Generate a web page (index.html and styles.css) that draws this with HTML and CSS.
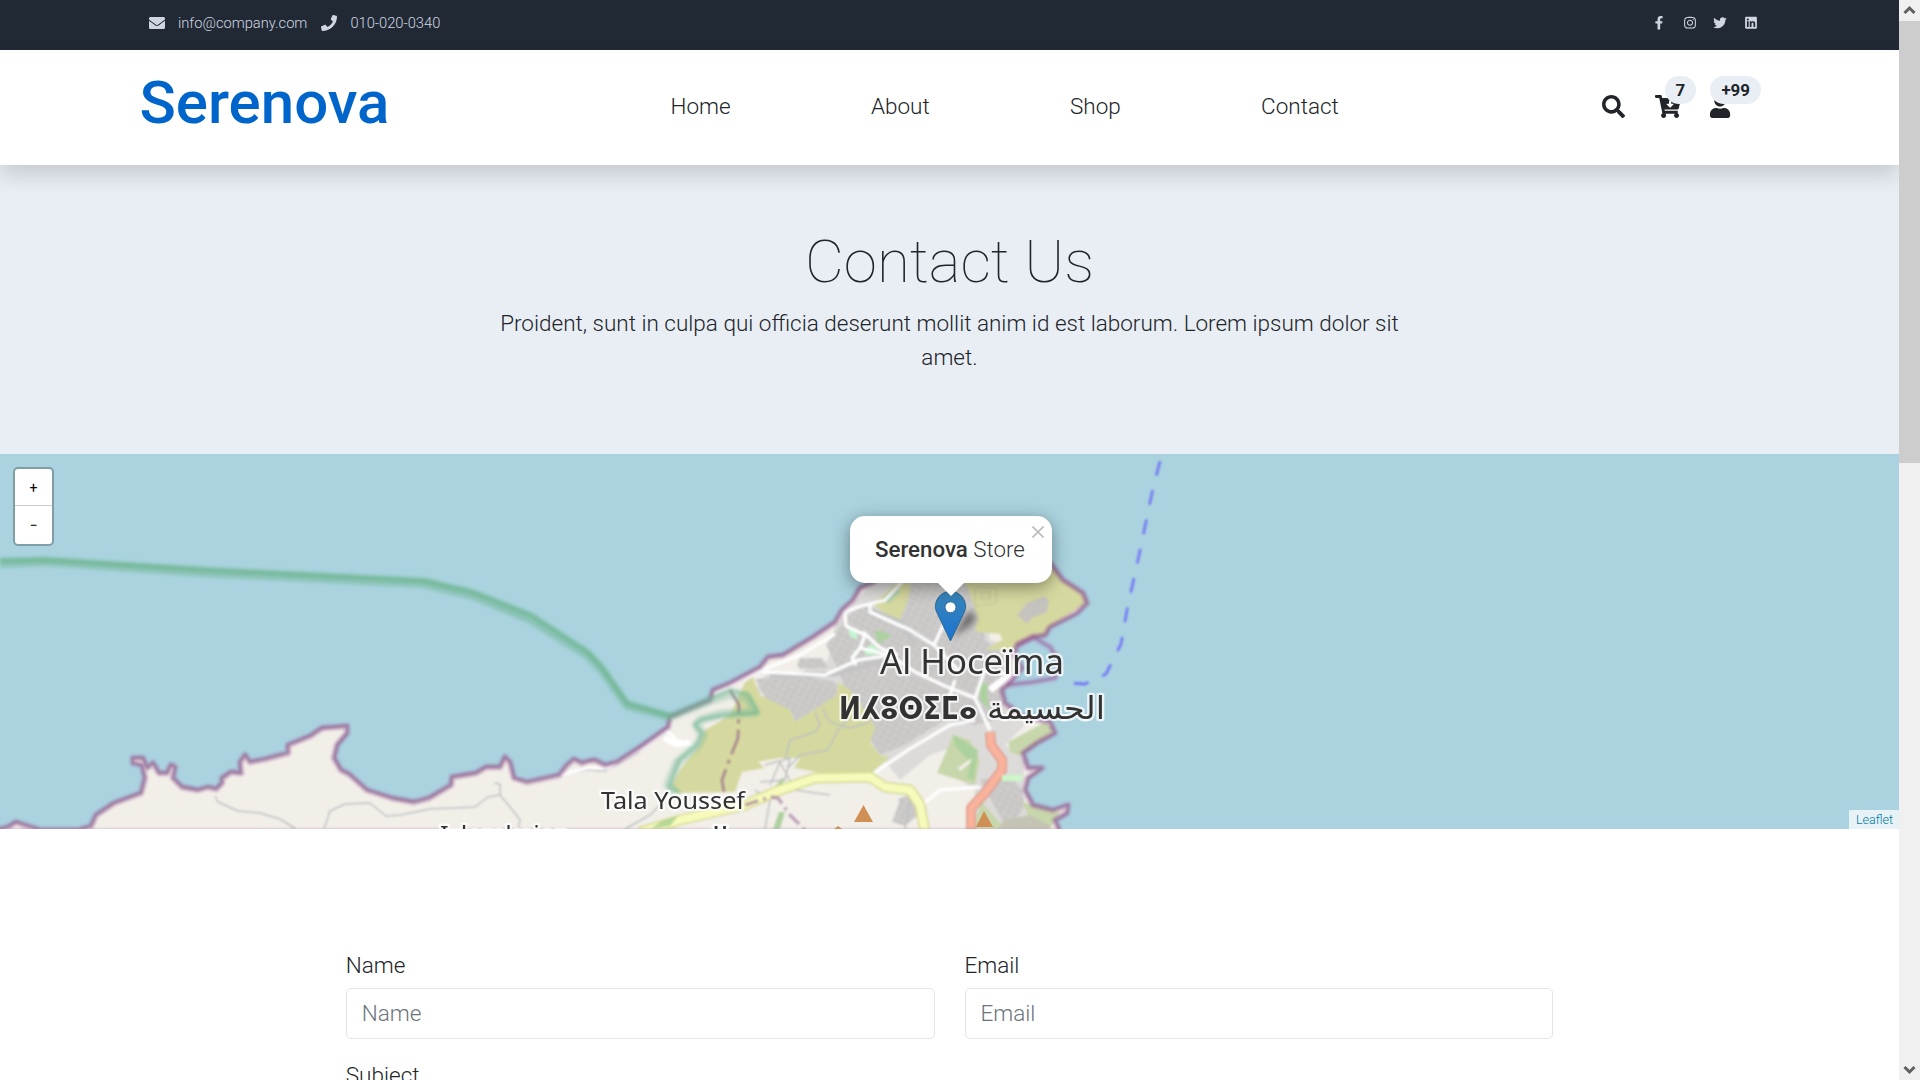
FILE: index.html
```html
<!DOCTYPE html>
<html lang="en">
<head>
<meta charset="utf-8">
<title>Serenova - Contact</title>
<link rel="stylesheet" href="styles.css">
</head>
<body>
<div class="page">
  <div class="topbar">
    <div class="container topbar-row">
      <div class="contact-links">
        <svg class="ic-mail" viewBox="0 0 512 512"><path d="M502.3 190.8c3.9-3.1 9.7-.2 9.7 4.7V400c0 26.5-21.5 48-48 48H48c-26.5 0-48-21.5-48-48V195.6c0-5 5.7-7.8 9.7-4.7 22.4 17.4 52.1 39.5 154.1 113.6 21.1 15.4 56.7 47.8 92.2 47.6 35.7.3 72-32.8 92.3-47.6 102-74.1 131.6-96.3 154-113.7zM256 320c23.2.4 56.6-29.2 73.4-41.4 132.7-96.3 142.8-104.7 173.4-128.7 5.8-4.5 9.2-11.5 9.2-18.9v-19c0-26.5-21.5-48-48-48H48c-26.5 0-48 21.5-48 48v19c0 7.4 3.4 14.3 9.2 18.9 30.6 23.9 40.7 32.4 173.4 128.7 16.8 12.2 50.2 41.8 73.4 41.4z"/></svg>
        <a class="mail">info@company.com</a>
        <svg class="ic-phone" viewBox="0 0 512 512"><path d="M493.4 24.6l-104-24c-11.3-2.6-22.9 3.3-27.5 13.9l-48 112c-4.2 9.8-1.4 21.3 6.9 28l60.6 49.6c-36 76.7-98.9 140.5-177.2 177.2l-49.6-60.6c-6.8-8.3-18.2-11.1-28-6.9l-112 48C3.9 366.5-2 378.1.6 389.4l24 104C27.1 504.2 36.7 512 48 512c256.1 0 464-207.5 464-464 0-11.2-7.7-20.9-18.6-23.4z"/></svg>
        <a>010-020-0340</a>
      </div>
      <div class="social">
        <svg viewBox="0 0 320 512"><path d="M279.14 288l14.22-92.66h-88.91v-60.13c0-25.35 12.42-50.06 52.24-50.06h40.42V6.26S260.43 0 225.36 0c-73.22 0-121.08 44.38-121.08 124.72v70.62H22.89V288h81.39v224h100.17V288z"/></svg>
        <svg viewBox="0 0 448 512"><path d="M224.1 141c-63.6 0-114.9 51.3-114.9 114.9s51.3 114.9 114.9 114.9S339 319.5 339 255.9 287.7 141 224.1 141zm0 189.6c-41.1 0-74.7-33.5-74.7-74.7s33.5-74.7 74.7-74.7 74.7 33.5 74.7 74.7-33.6 74.7-74.7 74.7zm146.4-194.3c0 14.9-12 26.8-26.8 26.8-14.9 0-26.8-12-26.8-26.8s12-26.8 26.8-26.8 26.8 12 26.8 26.8zm76.1 27.2c-1.7-35.9-9.9-67.7-36.2-93.9-26.2-26.2-58-34.4-93.9-36.2-37-2.1-147.9-2.1-184.9 0-35.8 1.7-67.6 9.9-93.9 36.1s-34.4 58-36.2 93.9c-2.1 37-2.1 147.9 0 184.9 1.7 35.9 9.9 67.7 36.2 93.9s58 34.4 93.9 36.2c37 2.1 147.9 2.1 184.9 0 35.9-1.7 67.7-9.9 93.9-36.2 26.2-26.2 34.4-58 36.2-93.9 2.1-37 2.1-147.8 0-184.8zM398.8 388c-7.8 19.6-22.9 34.7-42.6 42.6-29.5 11.7-99.5 9-132.1 9s-102.7 2.6-132.1-9c-19.6-7.8-34.7-22.9-42.6-42.6-11.7-29.5-9-99.5-9-132.1s-2.6-102.7 9-132.1c7.8-19.6 22.9-34.7 42.6-42.6 29.5-11.7 99.5-9 132.1-9s102.7-2.6 132.1 9c19.6 7.8 34.7 22.9 42.6 42.6 11.7 29.5 9 99.5 9 132.1s2.7 102.7-9 132.1z"/></svg>
        <svg viewBox="0 0 512 512"><path d="M459.37 151.716c.325 4.548.325 9.097.325 13.645 0 138.72-105.583 298.558-298.558 298.558-59.452 0-114.68-17.219-161.137-47.106 8.447.974 16.568 1.299 25.34 1.299 49.055 0 94.213-16.568 130.274-44.832-46.132-.975-84.792-31.188-98.112-72.772 6.498.974 12.995 1.624 19.818 1.624 9.421 0 18.843-1.3 27.614-3.573-48.081-9.747-84.143-51.98-84.143-102.985v-1.299c13.969 7.797 30.214 12.67 47.431 13.319-28.264-18.843-46.781-51.005-46.781-87.391 0-19.492 5.197-37.36 14.294-52.954 51.655 63.675 129.3 105.258 216.365 109.807-1.624-7.797-2.599-15.918-2.599-24.04 0-57.828 46.782-104.934 104.934-104.934 30.213 0 57.502 12.67 76.67 33.137 23.715-4.548 46.456-13.32 66.599-25.34-7.798 24.366-24.366 44.833-46.132 57.827 21.117-2.273 41.584-8.122 60.426-16.243-14.292 20.791-32.161 39.308-52.628 54.253z"/></svg>
        <svg viewBox="0 0 448 512"><path d="M416 32H31.9C14.3 32 0 46.5 0 64.3v383.4C0 465.5 14.3 480 31.9 480H416c17.6 0 32-14.5 32-32.3V64.3c0-17.8-14.4-32.3-32-32.3zM135.4 416H69V202.2h66.5V416zm-33.2-243c-21.3 0-38.5-17.3-38.5-38.5S80.9 96 102.2 96c21.2 0 38.5 17.3 38.5 38.5 0 21.3-17.2 38.5-38.5 38.5zm282.1 243h-66.4V312c0-24.8-.5-56.7-34.5-56.7-34.6 0-39.9 27-39.9 54.9V416h-66.4V202.2h63.7v29.2h.9c8.9-16.8 30.6-34.5 62.9-34.5 67.2 0 79.7 44.3 79.7 101.9V416z"/></svg>
      </div>
    </div>
  </div>

  <header class="header">
    <div class="container header-row">
      <a class="logo">Serenova</a>
      <nav class="nav"><a>Home</a><a>About</a><a>Shop</a><a>Contact</a></nav>
      <div class="tools">
        <span class="tool"><svg viewBox="0 0 512 512"><path d="M505 442.7L405.3 343c-4.5-4.5-10.6-7-17-7H372c27.6-35.3 44-79.7 44-128C416 93.1 322.9 0 208 0S0 93.1 0 208s93.1 208 208 208c48.3 0 92.7-16.4 128-44v16.3c0 6.4 2.5 12.5 7 17l99.7 99.7c9.4 9.4 24.6 9.4 33.9 0l28.3-28.3c9.4-9.4 9.4-24.6.1-34zM208 336c-70.7 0-128-57.2-128-128 0-70.7 57.2-128 128-128 70.7 0 128 57.2 128 128 0 70.7-57.2 128-128 128z"/></svg></span>
        <span class="tool"><svg viewBox="0 0 576 512"><path d="M504.717 320H211.572l6.545 32h268.418c15.401 0 26.816 14.301 23.403 29.319l-5.517 24.276C523.112 414.668 536 433.828 536 456c0 31.202-25.519 56.444-56.824 55.994-29.823-.429-54.35-24.631-55.155-54.447-.44-16.287 6.085-31.049 16.803-41.548H231.176C241.553 426.165 248 440.326 248 456c0 31.813-26.528 57.431-58.67 55.938-28.54-1.325-51.751-24.385-53.251-52.917-1.158-22.034 10.436-41.455 28.051-51.586L93.883 64H24C10.745 64 0 53.255 0 40V24C0 10.745 10.745 0 24 0h102.529c11.401 0 21.228 8.021 23.513 19.19L159.208 64H551.99c15.401 0 26.816 14.301 23.403 29.319l-47.273 208C525.637 312.246 515.923 320 504.717 320zM403.029 192H360v-60c0-6.627-5.373-12-12-12h-24c-6.627 0-12 5.373-12 12v60h-43.029c-10.691 0-16.045 12.926-8.485 20.485l67.029 67.029c4.686 4.686 12.284 4.686 16.971 0l67.029-67.029c7.559-7.559 2.205-20.485-8.486-20.485z"/></svg><b class="badge badge-cart">7</b></span>
        <span class="tool"><svg viewBox="0 0 448 512"><path d="M224 256c70.7 0 128-57.3 128-128S294.7 0 224 0 96 57.3 96 128s57.3 128 128 128zm89.6 32h-16.7c-22.2 10.2-46.9 16-72.9 16s-50.6-5.8-72.9-16h-16.7C60.2 288 0 348.2 0 422.4V464c0 26.5 21.5 48 48 48h352c26.5 0 48-21.5 48-48v-41.6c0-74.2-60.2-134.4-134.4-134.4z"/></svg><b class="badge badge-user">+99</b></span>
      </div>
    </div>
  </header>

  <section class="hero">
    <h1>Contact Us</h1>
    <p>Proident, sunt in culpa qui officia deserunt mollit anim id est laborum. Lorem ipsum dolor sit amet.</p>
  </section>

  <section class="map">
    <svg class="tiles" viewBox="0 454 1899 375">
      <defs>
        <path id="land" d="M0 829L8 827 16 822 31 827 41 830 78 830 91 826 96 815 114 803 141 793 145 778 142 765 133 763 133 758 143 758 147 768 153 763 159 773 167 773 171 765 175 767 173 778 182 787 198 790 208 787 216 789 222 783 222 778 231 772 241 773 240 762 245 755 250 762 265 759 288 753 288 745 310 736 322 728 335 727 347 726 347 733 337 745 334 758 341 770 349 774 367 790 392 798 414 802 429 798 451 785 452 777 476 773 486 767 500 767 505 757 510 762 514 778 527 782 559 775 567 765 574 759 582 763 588 761 595 760 605 765 617 762 640 747 668 727 670 717 710 700 713 690 730 683 760 667 768 657 783 655 813 637 835 622 842 610 853 600 860 588 873 582 900 560 1000 545 1050 563 1063 580 1083 593 1087 603 1077 613 1050 627 1045 635 1033 637 1017 645 1014 655 1022 668 1010 682 1002 690 1005 703 1022 716 1050 722 1055 733 1037 743 1023 753 1028 768 1042 768 1028 778 1025 790 1033 805 1053 810 1068 805 1067 813 1055 820 1060 832 0 832Z"/>
        <clipPath id="on-land"><use href="#land"/></clipPath>
        <pattern id="blocks" width="7" height="6" patternUnits="userSpaceOnUse" patternTransform="rotate(28)"><rect width="7" height="6" fill="#c8c6c5"/><path d="M0 0H7M0 0V6" stroke="#d6d4d3" stroke-width="1.4"/></pattern>
        <filter id="soft" x="-5%" y="-5%" width="110%" height="110%"><feGaussianBlur stdDeviation=".9"/></filter>
        <filter id="soft-text" x="-5%" y="-20%" width="110%" height="140%"><feGaussianBlur stdDeviation=".6"/></filter>
        <filter id="wide-soft" x="-5%" y="-20%" width="110%" height="140%"><feGaussianBlur stdDeviation="1.4"/></filter>
        <linearGradient id="pin" x1="0" y1="0" x2="0" y2="1"><stop offset="0" stop-color="#3a85b8"/><stop offset="1" stop-color="#1a73cf"/></linearGradient>
        <filter id="pin-blur" x="-50%" y="-50%" width="200%" height="200%"><feGaussianBlur stdDeviation="3.5"/></filter>
      </defs>
      <rect y="454" width="1899" height="375" fill="#aad3df"/>
      <g filter="url(#soft)" fill="none" stroke-linejoin="round">
        <use href="#land" fill="#f2efe9"/>
        <g clip-path="url(#on-land)">
          <path fill="#dddbd9" d="M835 625L870 585 900 555 975 560 990 640 1030 650 1010 690 1030 720 1005 745 1025 760 1022 800 1050 829 970 829 975 790 945 770 960 745 930 755 900 780 880 755 870 740 845 715 800 720 755 690 765 675 800 672 828 660Z"/>
          <path fill="url(#blocks)" d="M846 618L858 608 880 616 896 600 912 580 960 578 980 600 985 640 1010 660 995 720 975 725 945 720 905 745 880 755 870 740 850 700 838 670 826 645 836 632ZM755 679L800 675 836 682 838 700 795 722 790 710 770 706ZM797 665L800 658 822 658 828 668 800 669ZM980 780L1010 776 1022 790 1025 805 1018 817 1003 822ZM900 800L915 795 918 815 905 826 892 822Z"/>
          <path fill="#d6d99f" d="M745 682L753 677 760 695 790 710 795 722 837 695 838 682 850 690 868 715 875 728 870 742 880 755 890 757 870 775 840 776 794 768 800 758 780 758 758 762 765 768 742 772 735 792 676 793 672 785 680 770 700 745 705 730 730 715Z"/>
          <path fill="#d6d99f" d="M873 604L897 583 911 583 908 600 898 624ZM965 580L1000 560 1050 555 1090 600 1050 627 1040 640 1015 650 985 650 1002 640 1000 634 975 632 978 618Z"/>
          <path fill="#c6c3bf" d="M1017 615L1027 603 1045 596 1049 601 1047 612 1032 618 1027 624Z"/>
          <path stroke="#c2c2a4" stroke-width="1.2" d="M975 588H997L995 604 975 606ZM982 592H990V599H981Z"/>
          <path fill="#c8d7ab" d="M953 735L970 740 980 760 975 785 937 773ZM1008 742L1045 722 1055 730 1040 742 1020 756 1010 752ZM1022 802L1060 812 1050 829 1030 820ZM980 800L1003 826 1000 829 975 829Z"/>
          <path fill="#c5c4b4" d="M1004 820L1030 815 1050 825 1050 829H998Z"/>
          <path fill="#c4f5cf" d="M848 630L857 630 857 640 850 636ZM864 650L872 644 882 654 866 655ZM853 650L857 652 855 660Z"/>
          <path fill="#add19e" d="M953 734L978 750 974 780 967 778 970 762 955 746ZM980 683L988 683 987 695 990 710 980 700ZM874 630L884 632 892 636 878 644ZM782 778L785 778 780 788 774 788ZM779 812L785 812 780 829 773 829Z"/>
          <path fill="#b0d0b0" d="M883 598L897 586 900 592 888 604Z"/>
          <path fill="#f2efe9" d="M958 768L972 758 970 763 960 771Z"/>
          <path stroke="#bcbfc0" stroke-width="1.5" d="M215 796L218 802 238 811 260 813 280 819 296 829M324 829L330 811 345 804 370 803 386 816 400 815 430 809 475 807 488 797 500 795 510 807 520 820 518 829M500 795V784L494 783M559 775L575 772 588 770 605 771 640 752M815 712L820 725 815 732 790 740 785 760M850 718L838 730 828 750 800 755 788 768M770 785L780 762 795 790 830 795M755 790L770 800 765 829M898 800L912 795 905 829M625 829L650 815 665 800M765 765L790 758 785 780 760 782M822 708L830 722 850 728 870 722"/>
          <path stroke="#c4c4c4" stroke-width="5" d="M770 675L835 674 900 656M862 606L900 622 915 645"/>
          <path stroke="#fff" stroke-width="3.2" d="M560 775L588 768 608 768 640 750 666 730 676 740 692 745M713 695L740 680 762 670 800 655 835 634M762 672L825 675 858 660 885 656M902 582L885 600 870 604 858 607 845 612 846 626 865 635 860 648 852 658 856 665 M870 604L870 612 910 630 934 645 948 615M934 645L960 672M860 648L890 655 915 672 945 686 975 698 990 730M863 632L880 648 898 655M874 773L908 750 950 725 975 720M922 805L940 790 980 787M955 680L948 702M975 698L985 670 1010 675"/>
          <path stroke="#fff" stroke-width="6" d="M664 738L676 744 690 743"/>
          <path stroke="#fff" stroke-width="7" d="M990 690L1003 680 1045 668"/>
        </g>
        <path stroke="#d4d88c" stroke-width="11" d="M640 832L680 820 745 805 780 790 815 778 870 777 885 787 910 790 920 805 925 832"/>
        <path stroke="#f6fabb" stroke-width="8" d="M640 832L680 820 745 805 780 790 815 778 870 777 885 787 910 790 920 805 925 832"/>
        <path stroke="#d99483" stroke-width="10" d="M990 732L991 745 1002 760 1002 770 985 793 971 808 971 832"/>
        <path stroke="#f9b29c" stroke-width="7.5" d="M990 732L991 745 1002 760 1002 770 985 793 971 808 971 832"/>
        <path stroke="#cdf7c9" stroke-width="6" d="M1002 778H1022"/>
        <path stroke="#ac46ac" stroke-opacity=".22" stroke-width="7" d="M1017 645L1033 637 1050 647 1060 663 1055 678 1033 682 1007 685"/>
        <path stroke="#93628f" stroke-opacity=".6" stroke-width="2.5" d="M1017 645L1033 637 1050 647 1060 663 1055 678 1033 682 1007 685"/>
        <use href="#land" stroke="#a06aa0" stroke-opacity=".38" stroke-width="7"/>
        <use href="#land" stroke="#8e5c8b" stroke-opacity=".65" stroke-width="2.8"/>
        <path stroke="#9a6b8a" stroke-opacity=".7" stroke-width="3.2" stroke-dasharray="26 6 4 6" d="M730 690L739 705 738 738 730 758 722 780 724 792"/>
        <path stroke="#9a6b9a" stroke-opacity=".6" stroke-width="3.5" stroke-dasharray="14 5 3 5" d="M745 805L770 797 778 798 790 815 806 831"/>
        <g stroke="#6eb591" filter="url(#wide-soft)">
          <path stroke-opacity=".5" stroke-width="8" d="M0 564L45 562 204 573 424 584 473 596 531 620 588 656 602 671 627 706 672 718"/>
          <path stroke-opacity=".8" stroke-width="5" d="M0 560.500L45 559.500 204 569.500 424 580.500 473 592 531 615 588 652 602 667 627 703 672 716"/>
          <path stroke-opacity=".35" stroke-width="9" d="M672 716L712 700 730 694 747 698 755 712 720 714 700 720 697 726 703 735 698 745 677 763 668 785 675 793"/>
          <path stroke-opacity=".75" stroke-width="2.8" d="M672 716L712 698 730 690 748 694 758 713 725 715 703 719 694 724 702 733 697 745 679 760 669 787 680 793"/>
        </g>
        <path fill="#b6d995" d="M650 829L662 821 678 816 670 826Z"/>
        <path stroke="#767af5" stroke-width="2.8" stroke-dasharray="15 15" d="M1160 461L1152 493 1138 560 1127 610 1121 644 1106 674 1085 684 1070 683"/>
      </g>
      <g fill="#d08f55"><path d="M854 822L863.5 805 873 822ZM976 827L984 811 993 827ZM834 829L838 826 842 829Z"/></g>
      <g class="place" filter="url(#soft-text)">
        <text class="city" x="880" y="674" textLength="184" lengthAdjust="spacingAndGlyphs">Al Hoceïma</text>
        <text class="city tifinagh" x="839" y="719" textLength="138" lengthAdjust="spacingAndGlyphs">ⵍⵃⵓⵙⵉⵎⴰ</text>
        <text class="city arabic" x="987" y="719" textLength="118" lengthAdjust="spacingAndGlyphs">الحسيمة</text>
        <text class="village" x="601" y="809" textLength="144" lengthAdjust="spacingAndGlyphs">Tala Youssef</text>
        <text class="village" x="440" y="843" textLength="130" lengthAdjust="spacingAndGlyphs">Izlamkaien</text>
        <text class="village" x="698" y="843" textLength="40" lengthAdjust="spacingAndGlyphs">تال</text>
      </g>
      <path d="M952 638L968 612Q980 612 972 624Z" fill="#000" fill-opacity=".5" filter="url(#pin-blur)"/>
      <path d="M950.500 641L938.500 616Q935.300 610 935.300 606.500A15.200 15.200 0 0 1 965.700 606.500Q965.700 610 962.500 616Z" fill="url(#pin)" stroke="#2e6c97" stroke-width="1"/>
      <circle cx="950.500" cy="607.300" r="5.500" fill="#fff" stroke="#2e6c97"/>
    </svg>
    <div class="zoom"><a>+</a><a>−</a></div>
    <div class="popup"><strong>Serenova</strong> Store
      <svg class="close" viewBox="0 0 12 12"><path d="M.5.500l11 11M11.500.500l-11 11"/></svg>
    </div>
    <a class="credit">Leaflet</a>
  </section>

  <form class="form">
    <label>Name<input type="text" placeholder="Name"></label>
    <label>Email<input type="text" placeholder="Email"></label>
    <label class="wide">Subject<input type="text" placeholder="Subject"></label>
  </form>
</div>
<div class="scrollbar">
  <svg class="arrow" viewBox="0 0 21 21"><path d="M5.500 13L10.500 8l5 5"/></svg>
  <div class="thumb"></div>
  <svg class="arrow" viewBox="0 0 21 21"><path d="M5.500 8l5 5 5-5"/></svg>
</div>
</body>
</html>
```
FILE: styles.css
```css
* { box-sizing: border-box; }

body {
  margin: 0;
  height: 1080px;
  display: flex;
  overflow: hidden;
  font-family: Roboto, "Liberation Sans", sans-serif;
  font-size: 22.5px;
  font-weight: 300;
  line-height: 1.5;
  color: #212529;
  background: #fff;
}

.page { width: 1899px; height: 1080px; overflow: hidden; }
.container { width: 1650px; margin: 0 auto; padding: 0 15px; }

/* Top bar */
.topbar { height: 50px; background: #212934; color: #cfd6e1; font-size: 14.7px; }
.topbar-row { display: flex; justify-content: space-between; padding: 0 16.5px 0 24.5px; height: 46px; align-items: center; }
.topbar svg { fill: currentColor; }
.contact-links { display: flex; align-items: center; }
.contact-links svg { width: 16px; height: 16px; }
.contact-links a { margin-left: 13px; }
.contact-links .mail { margin-right: 14px; }
.social { display: flex; align-items: center; gap: 16.6px; }
.social svg { width: 14px; height: 13.5px; }

/* Header */
.header { position: relative; z-index: 2; height: 115px; background: #fff; box-shadow: 0 10px 20px rgba(0, 0, 0, .15); }
.header-row { display: grid; grid-template-columns: 531px 1fr auto; height: 115px; align-items: center; }
.logo { font-size: 60px; font-weight: 500; line-height: 1.2; color: #0065cb; padding-bottom: 10px; }
.nav { display: flex; gap: 140.3px; padding-bottom: 1px; }
.tools { display: flex; gap: 30px; padding: 0 29px 2px 0; }
.tool { position: relative; display: flex; }
.tool svg { height: 23px; fill: #212529; }
.badge {
  position: absolute;
  top: -19px;
  padding: 0 11px;
  border-radius: 14px;
  font-size: 16.9px;
  font-weight: 700;
  line-height: 28px;
  background: #e9eef5;
}
.badge-cart { left: 10px; }
.badge-user { left: 0; }

/* Hero */
.hero { height: 289px; padding-top: 61px; background: #e9eef5; text-align: center; }
.hero h1 { margin: 0 0 9px; font-size: 60px; font-weight: 100; line-height: 72px; }
.hero p { width: 960px; margin: 0 auto; }

/* Map */
.map { position: relative; height: 375px; overflow: hidden; }
.tiles { display: block; width: 1899px; height: 375px; }
.place { fill: #333; stroke: rgba(255, 255, 255, .75); stroke-width: 4.5px; paint-order: stroke; stroke-linejoin: round; font-family: "Noto Sans", "DejaVu Sans", sans-serif; font-weight: 400; }
.city { font-size: 34px; }
.tifinagh, .arabic { font-family: "DejaVu Sans", sans-serif; font-size: 31px; }
.tifinagh { font-weight: 700; }
.village { font-size: 23px; }
.zoom {
  position: absolute;
  left: 13px;
  top: 13px;
  width: 41px;
  border: 2px solid rgba(0, 0, 0, .25);
  border-radius: 5px;
  background: #fff;
  background-clip: padding-box;
  color: #000;
  font-size: 14px;
  font-weight: 400;
  text-align: center;
}
.zoom a { display: block; height: 38px; line-height: 38px; }
.zoom a:first-child { height: 37px; border-bottom: 1px solid #ccc; }
.popup {
  position: absolute;
  left: 850px;
  top: 62px;
  width: 202px;
  height: 67px;
  padding-left: 25px;
  border-radius: 15px;
  line-height: 66px;
  font-size: 22.3px;
  white-space: nowrap;
  color: #333;
  background: #fff;
  box-shadow: 0 4px 17px rgba(0, 0, 0, .4);
}
.popup strong { font-weight: 500; }
.popup::after {
  content: "";
  position: absolute;
  left: 88px;
  top: 67px;
  border: 13px solid transparent;
  border-top-color: #fff;
  border-bottom: 0;
}
.close { position: absolute; right: 8px; top: 10px; width: 12px; height: 12px; fill: none; stroke: #bbb; stroke-width: 1.6; }
.credit {
  position: absolute;
  right: 0;
  bottom: 0;
  height: 19px;
  width: 50px;
  padding-left: 7px;
  font-size: 12.5px;
  line-height: 19px;
  color: #0078a8;
  background: rgba(255, 255, 255, .7);
}

/* Form */
.form {
  display: grid;
  grid-template-columns: 1fr 1fr;
  gap: 20px 30px;
  width: 1207.5px;
  margin: 0 auto;
  padding-top: 120px;
}
.form label { display: block; }
.form input {
  display: block;
  width: 100%;
  height: 51px;
  margin-top: 5px;
  padding: 0 15px;
  border: 1px solid #e3e5e8;
  border-radius: 5px;
  font: inherit;
  background: #fff;
}
.form input::placeholder { color: #6c757d; opacity: 1; }
.wide { grid-column: 1 / -1; }

/* Scrollbar */
.scrollbar { display: flex; flex-direction: column; width: 21px; height: 1080px; background: #f0f0f0; }
.arrow { width: 21px; height: 21px; fill: none; stroke: #606060; stroke-width: 3; }
.thumb { height: 442px; margin-bottom: auto; background: #cdcdcd; }
```
